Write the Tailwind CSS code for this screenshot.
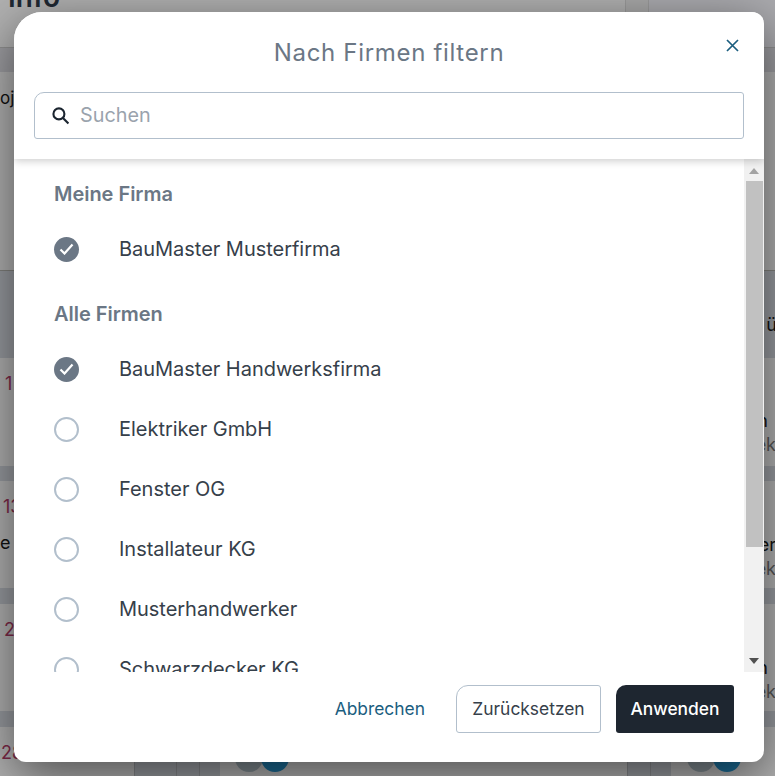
<!DOCTYPE html>
<html><head><meta charset="utf-8"><script src="https://cdn.jsdelivr.net/npm/@tailwindcss/browser@4"></script></head>
<body class="m-0 overflow-hidden">
<div class="relative w-[775px] h-[776px] overflow-hidden bg-[#b0b0b0] font-['Inter',sans-serif]">
  <!-- page beneath -->
  <div class="flex flex-col w-full h-full">
    <div class="flex h-[47px] shrink-0 justify-between">
      <div class="-mt-[17px] pl-2 text-[28px] h-[28px] font-semibold leading-none text-[#1f2933]">Info</div>
      <div class="w-[150px] flex h-[47px]"><span class="w-[23px] bg-[#a8a8a8] border-l border-[#9a9a9a]"></span><span class="flex-1 bg-[#aaaaae] border-l border-[#9a9a9a]"></span></div>
    </div>
    <div class="h-[25px] shrink-0 bg-[#9c9ca0] border-t border-[#8f8f8f]"></div>
    <div class="h-[198px] shrink-0 pt-[14px] text-[17px] leading-6 text-[#111]">oj</div>
    <div class="flex justify-end h-[88px] shrink-0 bg-[#979a9f] border-t border-[#80807c] pt-[40px] -mr-[2px] text-[18px] text-[#111]">ü</div>
    <div class="flex justify-between h-[108px] shrink-0 pl-[5px] pt-[14px] text-[18px] leading-6 text-[#7d2a48]"><span>1</span><span class="flex flex-col items-end pt-[37px]"><span class="text-[#111] mr-[7px]">n</span><span class="text-[#555] -mr-px">ek</span></span></div>
    <div class="h-[15px] shrink-0 bg-[#979a9f]"></div>
    <div class="flex justify-between h-[107px] shrink-0 pl-[3px] pt-[14px] text-[18px] leading-6 text-[#7d2a48]"><span class="flex flex-col"><span>13</span><span class="text-[#111] -ml-[3px] pt-3">e</span></span><span class="flex flex-col items-end pt-[38px]"><span class="text-[#111] -mr-px">er</span><span class="text-[#555] -mr-px">ek</span></span></div>
    <div class="h-[16px] shrink-0 bg-[#979a9f]"></div>
    <div class="flex justify-between h-[107px] shrink-0 pl-[4px] pt-[14px] text-[18px] leading-6 text-[#7d2a48]"><span>2</span><span class="flex flex-col items-end pt-[38px]"><span class="text-[#111] mr-[7px]">n</span><span class="text-[#555] -mr-px">ek</span></span></div>
    <div class="h-[16px] shrink-0 bg-[#979a9f]"></div>
    <div class="flex flex-1 text-[18px] leading-6 text-[#7d2a48]">
      <span class="w-[134px] shrink-0 pl-[1px] pt-[14px]">28</span>
      <span class="w-[42px] shrink-0 bg-[#979a9f] border-l border-[#85878a]"></span>
      <span class="w-[23px] shrink-0 bg-[#979a9f] border-l border-[#85878a]"></span>
      <span class="w-[21px] shrink-0 bg-[#979a9f] border-l border-[#85878a]"></span>
      <div class="w-[15px] shrink-0"></div>
      <div class="flex shrink-0 pt-[17px]">
        <span class="w-[28px] h-[28px] rounded-full bg-[#7f8a90]"></span><span class="w-[28px] h-[28px] -ml-[2px] rounded-full bg-[#1c6c96]"></span>
      </div>
      <span class="w-[338px] shrink-0"></span>
      <span class="w-[23px] shrink-0 bg-[#979a9f] border-l border-[#85878a]"></span>
      <span class="w-[21px] shrink-0 bg-[#979a9f] border-l border-[#85878a]"></span>
      <div class="w-[16px] shrink-0"></div>
      <div class="flex shrink-0 pt-[17px]">
        <span class="w-[28px] h-[28px] rounded-full bg-[#7f8a90]"></span><span class="w-[28px] h-[28px] -ml-[2px] rounded-full bg-[#1c6c96]"></span>
      </div>
    </div>
  </div>
  <!-- modal -->
  <div class="absolute left-[14px] top-3 w-[750px] h-[750px] flex flex-col bg-white overflow-hidden rounded-tl-[28px] rounded-tr-xl rounded-br-xl rounded-bl-xl shadow-[0_14px_50px_rgba(0,0,0,0.55)] text-[#36404a]">
    <div class="relative z-10 shrink-0 h-[147px] shadow-[0_2px_8px_rgba(0,0,0,0.2)] bg-white">
      <h2 class="pt-[25px] text-center text-[24px] leading-8 tracking-[0.68px] font-normal text-[#6b7785]">Nach Firmen filtern</h2>
      <svg class="absolute right-[25px] top-[27px]" width="13" height="13" viewBox="0 0 13 13" fill="none" stroke="#1b5e7f" stroke-width="1.7"><path d="M1 1l11 11M12 1L1 12"/></svg>
      <div class="absolute left-5 right-5 top-20 h-[47px] flex items-center border border-[#b2bfcc] rounded-tl-[10px] rounded-tr-[3px] rounded-br-[3px] rounded-bl-[3px] pl-4">
        <svg class="shrink-0" width="19" height="19" viewBox="0 0 18 18" fill="none" stroke="#1b2530" stroke-width="2"><circle cx="7.5" cy="7.5" r="5.2"/><path d="M11.3 11.3L16.5 16.5"/></svg>
        <span class="ml-[10px] text-[19.8px] text-[#9aa3ad]">Suchen</span>
      </div>
    </div>
    <div class="relative h-[513px] shrink-0 overflow-hidden pl-10 text-[20px] tracking-[-0.03px]">
      <div class="absolute right-0 top-0 bottom-0 w-[20px] bg-[#f1f1f1]">
        <div class="absolute left-[2px] top-[22px] w-[17px] h-[366px] bg-[#c1c1c1]"></div>
        <svg class="absolute left-[5px] top-[9px]" width="10" height="6" viewBox="0 0 10 6"><path d="M5 0l5 6H0z" fill="#a3a3a3"/></svg>
        <svg class="absolute left-[5px] bottom-[8px]" width="10" height="6" viewBox="0 0 10 6"><path d="M5 6L0 0h10z" fill="#505050"/></svg>
      </div>
      <h3 class="pt-[23px] text-[20px] leading-6 font-semibold text-[#6b7785]">Meine Firma</h3>
      <div class="flex items-center h-[60px] mt-[13px]">
        <span class="w-[25px] h-[25px] rounded-full bg-[#6b7785] flex items-center justify-center"><svg width="15" height="12" viewBox="0 0 15 12" fill="none" stroke="#fff" stroke-width="2.2"><path d="M1.5 6.5l4 4 8-9"/></svg></span>
        <span class="ml-10">BauMaster Musterfirma</span>
      </div>
      <h3 class="pt-[23px] text-[20px] leading-6 font-semibold text-[#6b7785]">Alle Firmen</h3>
      <div class="flex items-center h-[60px] mt-[13px]">
        <span class="w-[25px] h-[25px] rounded-full bg-[#6b7785] flex items-center justify-center"><svg width="15" height="12" viewBox="0 0 15 12" fill="none" stroke="#fff" stroke-width="2.2"><path d="M1.5 6.5l4 4 8-9"/></svg></span>
        <span class="ml-10">BauMaster Handwerksfirma</span>
      </div>
      <div class="flex items-center h-[60px]"><span class="w-[25px] h-[25px] rounded-full border-2 border-[#b2bfcc]"></span><span class="ml-10">Elektriker GmbH</span></div>
      <div class="flex items-center h-[60px]"><span class="w-[25px] h-[25px] rounded-full border-2 border-[#b2bfcc]"></span><span class="ml-10">Fenster OG</span></div>
      <div class="flex items-center h-[60px]"><span class="w-[25px] h-[25px] rounded-full border-2 border-[#b2bfcc]"></span><span class="ml-10">Installateur KG</span></div>
      <div class="flex items-center h-[60px]"><span class="w-[25px] h-[25px] rounded-full border-2 border-[#b2bfcc]"></span><span class="ml-10">Musterhandwerker</span></div>
      <div class="flex items-center h-[60px]"><span class="w-[25px] h-[25px] rounded-full border-2 border-[#b2bfcc]"></span><span class="ml-10">Schwarzdecker KG</span></div>
    </div>
    <div class="flex-1 flex items-start justify-end pt-[13px] pr-[30px] text-[17.4px]">
      <button class="h-[48px] px-4 text-[#1b5e7f]">Abbrechen</button>
      <button class="h-[48px] w-[145px] ml-[15px] border border-[#b2bfcc] bg-white rounded-tl-[12px] rounded-tr-[3px] rounded-br-[3px] rounded-bl-[3px] text-[#36404a]">Zurücksetzen</button>
      <button class="h-[48px] w-[118px] ml-[15px] bg-[#1e2630] text-white font-medium rounded-tl-[10px] rounded-tr-[3px] rounded-br-[3px] rounded-bl-[3px]">Anwenden</button>
    </div>
  </div>
</div>
</body></html>
